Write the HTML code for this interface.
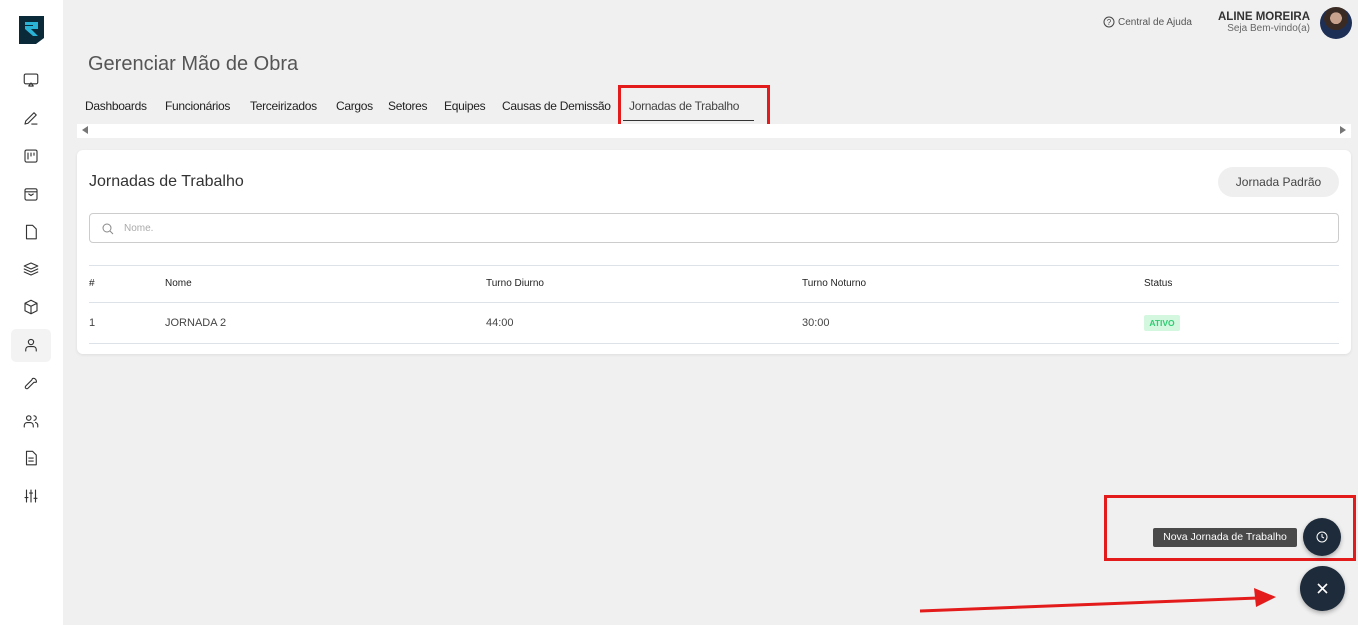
<!DOCTYPE html>
<html><head><meta charset="utf-8"><style>
*{box-sizing:border-box;margin:0;padding:0}
body{width:1358px;height:625px;overflow:hidden;background:#f0f0f0;font-family:"Liberation Sans",sans-serif;position:relative;color:#333}
.sb{position:absolute;left:0;top:0;width:63px;height:625px;background:#fff}
.ic{position:absolute;left:22px;width:18px;height:18px}
.ic svg{width:18px;height:18px;fill:none;stroke:#333;stroke-width:1.5;stroke-linecap:round;stroke-linejoin:round}
.abs{position:absolute}
.tab{position:absolute;top:99px;font-size:12px;letter-spacing:-0.3px;color:#222}
</style></head><body>
<div class="sb">
<svg class="abs" style="left:19px;top:16px" width="25" height="28" viewBox="0 0 25 28"><path d="M0 0H25V22L17 28H0Z" fill="#0a2a3a"/><path d="M6 6H19V13H12L19 20H14L6 13V10H14V9H6Z" fill="#2bb3d6"/></svg>
<div class="abs" style="left:11px;top:329px;width:40px;height:33px;background:#f3f3f3;border-radius:5px"></div>
<div class="ic" style="top:71px"><svg viewBox="0 0 24 24"><rect x="3" y="4" width="18" height="13" rx="2"/><path d="M9 20l3-4 3 4z"/></svg></div>
<div class="ic" style="top:109px"><svg viewBox="0 0 24 24"><path d="M4 20l1-4L16 5l3 3L8 19z M13 20h7"/></svg></div>
<div class="ic" style="top:147px"><svg viewBox="0 0 24 24"><rect x="4" y="4" width="16" height="16" rx="2"/><path d="M8 8v8M12 8v4M16 8v3"/></svg></div>
<div class="ic" style="top:185px"><svg viewBox="0 0 24 24"><rect x="4" y="5" width="16" height="15" rx="2"/><path d="M4 9h16M9 12l3 2 3-2"/></svg></div>
<div class="ic" style="top:223px"><svg viewBox="0 0 24 24"><path d="M6 3h8l5 5v13H6z"/></svg></div>
<div class="ic" style="top:260px"><svg viewBox="0 0 24 24"><path d="M12 4l9 4-9 4-9-4z M3 12l9 4 9-4 M3 16l9 4 9-4"/></svg></div>
<div class="ic" style="top:298px"><svg viewBox="0 0 24 24"><path d="M12 3l8 4v10l-8 4-8-4V7z M4 7l8 4 8-4 M12 11v10"/></svg></div>
<div class="ic" style="top:336px"><svg viewBox="0 0 24 24"><circle cx="12" cy="8" r="3.5"/><path d="M5 20v-2a4 4 0 014-4h6a4 4 0 014 4v2"/></svg></div>
<div class="ic" style="top:374px"><svg viewBox="0 0 24 24"><path d="M14 6a4 4 0 015 5l-3 0-8 8a2 2 0 01-3-3l8-8z"/></svg></div>
<div class="ic" style="top:412px"><svg viewBox="0 0 24 24"><circle cx="9" cy="8" r="3"/><path d="M3 20v-2a4 4 0 014-4h4a4 4 0 014 4v2M16 5a3 3 0 010 6M21 20v-2a4 4 0 00-3-4"/></svg></div>
<div class="ic" style="top:449px"><svg viewBox="0 0 24 24"><path d="M6 3h8l5 5v13H6z M9 12h6M9 16h6"/></svg></div>
<div class="ic" style="top:487px"><svg viewBox="0 0 24 24"><path d="M6 4v16M12 4v16M18 4v16M4 14h4M10 8h4M16 15h4"/></svg></div>
</div>

<div class="abs" style="left:1103px;top:16px;font-size:10px;color:#555;display:flex;align-items:center;gap:3px"><svg width="12" height="12" viewBox="0 0 12 12"><circle cx="6" cy="6" r="5" fill="none" stroke="#444"/><text x="6" y="9" font-size="8" text-anchor="middle" fill="#444">?</text></svg>Central de Ajuda</div>
<div class="abs" style="right:48px;top:11px;text-align:right"><div style="font-size:11.5px;font-weight:bold;color:#333">ALINE MOREIRA</div><div style="font-size:10px;color:#666">Seja Bem-vindo(a)</div></div>
<div class="abs" style="left:1320px;top:7px;width:32px;height:32px;border-radius:50%;background:radial-gradient(circle at 50% 35%,#c8a28c 0 22%,#3a2a24 23% 45%,#1e2f55 46%)"></div>

<div class="abs" style="left:88px;top:53px;font-size:20px;color:#555">Gerenciar Mão de Obra</div>
<div class="tab" style="left:85px">Dashboards</div>
<div class="tab" style="left:165px">Funcionários</div>
<div class="tab" style="left:250px">Terceirizados</div>
<div class="tab" style="left:336px">Cargos</div>
<div class="tab" style="left:388px">Setores</div>
<div class="tab" style="left:444px">Equipes</div>
<div class="tab" style="left:502px">Causas de Demissão</div>
<div class="tab" style="left:629px;color:#444">Jornadas de Trabalho</div>
<div class="abs" style="left:623px;top:120px;width:131px;height:1px;background:#333"></div>
<div class="abs" style="left:618px;top:85px;width:152px;height:45px;border:3px solid #e41b1b"></div>
<div class="abs" style="left:77px;top:124px;width:1274px;height:14px;background:#fff"></div>
<div class="abs" style="left:82px;top:126px;width:0;height:0;border:4px solid transparent;border-right:6px solid #777;border-left:0"></div>
<div class="abs" style="left:1340px;top:126px;width:0;height:0;border:4px solid transparent;border-left:6px solid #777;border-right:0"></div>

<div class="abs" style="left:77px;top:150px;width:1274px;height:204px;background:#fff;border-radius:6px;box-shadow:0 1px 3px rgba(0,0,0,.08)">
<div class="abs" style="left:12px;top:23px;font-size:16px;color:#333">Jornadas de Trabalho</div>
<div class="abs" style="left:1141px;top:17px;width:121px;height:30px;border-radius:15px;background:#efefef;font-size:12px;color:#444;text-align:center;line-height:30px">Jornada Padrão</div>
<div class="abs" style="left:12px;top:63px;width:1250px;height:30px;border:1px solid #ccc;border-radius:4px">
<svg class="abs" style="left:12px;top:9px" width="12" height="12" viewBox="0 0 12 12"><circle cx="5" cy="5" r="4" fill="none" stroke="#888"/><path d="M8 8l3 3" stroke="#888"/></svg>
<div class="abs" style="left:34px;top:9px;font-size:10px;color:#aaa">Nome.</div></div>
<div class="abs" style="left:12px;top:115px;width:1250px;height:1px;background:#dde2e8"></div>
<div class="abs" style="left:12px;top:152px;width:1250px;height:1px;background:#dde2e8"></div>
<div class="abs" style="left:12px;top:193px;width:1250px;height:1px;background:#dde2e8"></div>
<div class="abs" style="top:128px;left:12px;font-size:10px;color:#222">#</div>
<div class="abs" style="top:128px;left:88px;font-size:10px;color:#222">Nome</div>
<div class="abs" style="top:128px;left:409px;font-size:10px;color:#222">Turno Diurno</div>
<div class="abs" style="top:128px;left:725px;font-size:10px;color:#222">Turno Noturno</div>
<div class="abs" style="top:128px;left:1067px;font-size:10px;color:#222">Status</div>
<div class="abs" style="top:167px;left:12px;font-size:11px;color:#444">1</div>
<div class="abs" style="top:167px;left:88px;font-size:11px;color:#444">JORNADA 2</div>
<div class="abs" style="top:167px;left:409px;font-size:11px;color:#444">44:00</div>
<div class="abs" style="top:167px;left:725px;font-size:11px;color:#444">30:00</div>
<div class="abs" style="top:165px;left:1067px;width:36px;height:16px;background:#d4f7e0;border-radius:2px;color:#2ecc71;font-size:8.5px;font-weight:bold;text-align:center;line-height:16px">ATIVO</div>
</div>

<div class="abs" style="left:1104px;top:495px;width:252px;height:66px;border:3px solid #e41b1b"></div>
<div class="abs" style="left:1153px;top:528px;width:144px;height:19px;background:#4a4a4a;border-radius:2px;color:#fff;font-size:10.5px;line-height:19px;text-align:center">Nova Jornada de Trabalho</div>
<div class="abs" style="left:1303px;top:518px;width:38px;height:38px;border-radius:50%;background:#1e2b3a;box-shadow:0 2px 4px rgba(0,0,0,.3)"><svg class="abs" style="left:13px;top:13px" width="12" height="12" viewBox="0 0 12 12"><circle cx="6" cy="6" r="5" fill="none" stroke="#fff"/><path d="M6 3v3l2 1" stroke="#fff" fill="none"/></svg></div>
<div class="abs" style="left:1300px;top:566px;width:45px;height:45px;border-radius:50%;background:#1e2b3a;box-shadow:0 2px 5px rgba(0,0,0,.3)"><svg class="abs" style="left:16px;top:16px" width="13" height="13" viewBox="0 0 13 13"><path d="M2 2l9 9M11 2l-9 9" stroke="#fff" stroke-width="1.6"/></svg></div>
<svg class="abs" style="left:0;top:0" width="1358" height="625"><path d="M920 611L1258 598" stroke="#e41b1b" stroke-width="3"/><path d="M1276 597L1254 588L1256 607Z" fill="#e41b1b"/></svg>
</body></html>
